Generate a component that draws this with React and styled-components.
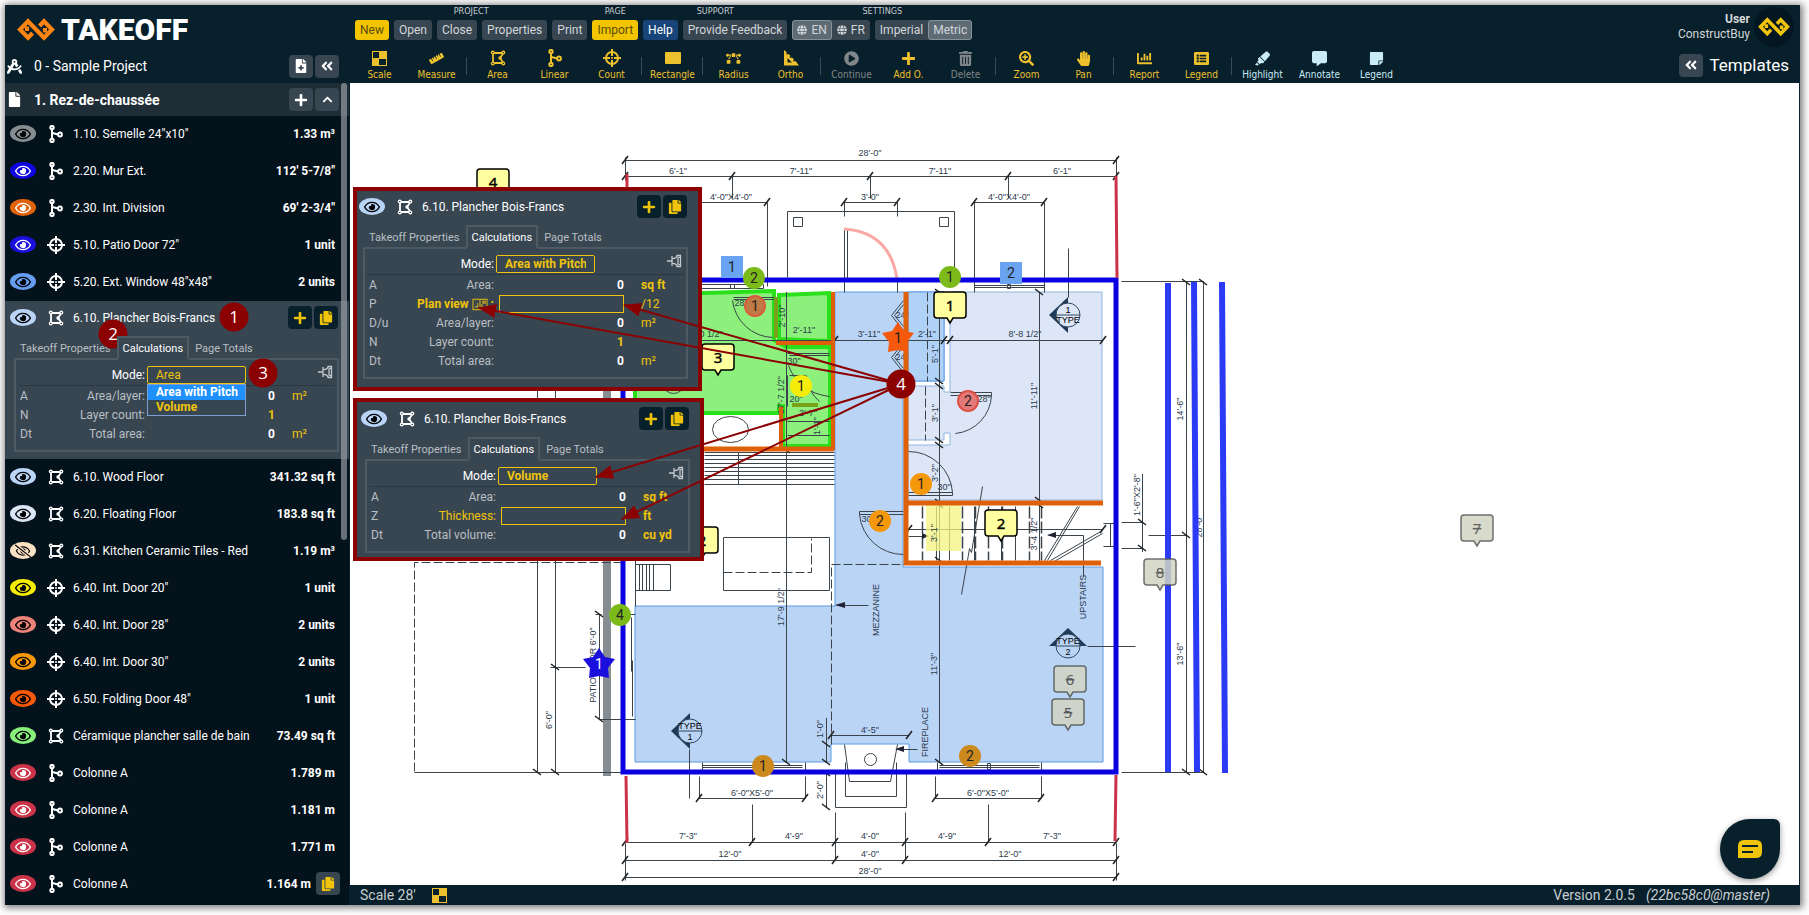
import React from "react";
import styled, { createGlobalStyle } from "styled-components";
import {
  FaRegEye, FaRegEyeSlash, FaDraftingCompass, FaFileMedical, FaAngleDoubleLeft, FaFile, FaPlus,
  FaChevronUp, FaCopy, FaGlobe, FaRuler, FaBezierCurve, FaPlayCircle, FaTrashAlt, FaSearchPlus,
  FaHandPaper, FaChartBar, FaListAlt, FaHighlighter, FaCommentAlt, FaStickyNote,
} from "react-icons/fa";

const navy = "#08202b"
const slate = "#384652"
const gold = "#f0c40a"
const crimson = "#8b0000"

/* ---------- icons ---------- */

const AreaIcon = () => (
  <svg width="16" height="16" viewBox="0 0 16 16" fill="none" stroke="currentColor" strokeWidth="1.800">
    <path d="M3 3H13.500L10 8L13.500 13H3Z" />
    <g fill="currentColor" stroke="none">
      <circle cx="2.800" cy="2.600" r="2" /><circle cx="13.300" cy="2.600" r="2" />
      <circle cx="2.800" cy="13.400" r="2" /><circle cx="13.300" cy="13.400" r="2" /><circle cx="10" cy="8" r="1.700" />
    </g>
    <g fill={navy} stroke="none">
      <circle cx="2.800" cy="2.600" r="0.700" /><circle cx="13.300" cy="2.600" r="0.700" />
      <circle cx="2.800" cy="13.400" r="0.700" /><circle cx="13.300" cy="13.400" r="0.700" />
    </g>
  </svg>
)

const LinearIcon = () => (
  <svg width="16" height="18" viewBox="0 0 16 18" fill="none" stroke="currentColor" strokeWidth="2">
    <path d="M4 4.500V13.500M4.500 8L10 9.500" />
    <circle cx="4" cy="2.600" r="1.700" /><circle cx="4" cy="15.400" r="1.700" /><circle cx="12" cy="9.500" r="1.900" />
  </svg>
)

const CountIcon = () => (
  <svg width="18" height="18" viewBox="0 0 18 18" fill="none" stroke="currentColor" strokeWidth="2">
    <circle cx="9" cy="9" r="6" />
    <path d="M9 0V7M9 11V18M0 9H7M11 9H18" />
    <circle cx="9" cy="9" r="1" fill="currentColor" stroke="none" />
  </svg>
)

const CheckerIcon = () => (
  <svg width="15" height="15" viewBox="0 0 15 15">
    <rect x="0.500" y="0.500" width="14" height="14" fill={navy} stroke="currentColor" />
    <path d="M7 0H15V8H7ZM0 7H7V15H0Z" fill="currentColor" />
  </svg>
)

const RectIcon = () => (
  <svg width="16" height="14" viewBox="0 0 16 14"><rect y="1" width="16" height="12" rx="1" fill="currentColor" /></svg>
)

const OrthoIcon = () => (
  <svg width="16" height="16" viewBox="0 0 16 16">
    <path fillRule="evenodd" fill="currentColor" d="M1 0L4 2.500L3 3.500L4 4.500L5.500 4L7.500 6L6.500 7L7.500 8L9 7.500L11 9.500L10 10.500L11 11.500L12.500 11L16 15.500H1ZM4.500 8V12.500H9Z" />
  </svg>
)

const PinIcon = () => (
  <svg width="15" height="14" viewBox="0 0 15 14" fill="none" stroke="#c4c9cd" strokeWidth="1.300">
    <path d="M0 7H5M5 2V12M5 4.500Q8 5 10 2.500V1.500H13.500V12.500H10V11.500Q8 9 5 9.500M13.500 3L11 4V10L13.500 11" />
  </svg>
)

const PlanIcon = () => (
  <svg width="16" height="13" viewBox="0 0 17 13" fill="none" stroke="#c9a616" strokeWidth="1.200">
    <path d="M1 1H16V12H1ZM8.500 1V12M3 9H6V5M10.500 6V9.500H14M11.500 3H14V5H11.500Z" />
  </svg>
)

const BrandMark = ({ color, width }) => (
  <svg width={width} viewBox="0 0 38 23" fill="none" stroke={color} strokeWidth="4.200">
    <path d="M15.500 15L11 19.800L3 11.500L11 3.200L27 19.800L35 11.500L27 3.200L22.500 8M10 8.500V13M28 10V14.500" />
  </svg>
)

const kindIcons = { area: AreaIcon, linear: LinearIcon, count: CountIcon }

/* ---------- data ---------- */

const itemsBefore = [
  { name: '1.10. Semelle 24"x10"', value: "1.33 m³", kind: "linear", color: "#868d92", eye: "#000" },
  { name: "2.20. Mur Ext.", value: "112' 5-7/8\"", kind: "linear", color: "#0f05e0", eye: "#fff" },
  { name: "2.30. Int. Division", value: "69' 2-3/4\"", kind: "linear", color: "#e06209", eye: "#fff" },
  { name: '5.10. Patio Door 72"', value: "1 unit", kind: "count", color: "#1b0fdd", eye: "#fff" },
  { name: '5.20. Ext. Window 48"x48"', value: "2 units", kind: "count", color: "#659df0", eye: "#000" },
]

const itemsAfter = [
  { name: "6.10. Wood Floor", value: "341.32 sq ft", kind: "area", color: "#bad4f7", eye: "#000" },
  { name: "6.20. Floating Floor", value: "183.8 sq ft", kind: "area", color: "#dce5f6", eye: "#000" },
  { name: "6.31. Kitchen Ceramic Tiles - Red", value: "1.19 m³", kind: "area", color: "#fbe2c4", eye: "#000", hidden: true },
  { name: '6.40. Int. Door 20"', value: "1 unit", kind: "count", color: "#f5ec05", eye: "#000" },
  { name: '6.40. Int. Door 28"', value: "2 units", kind: "count", color: "#ec8278", eye: "#000" },
  { name: '6.40. Int. Door 30"', value: "2 units", kind: "count", color: "#f69708", eye: "#000" },
  { name: '6.50. Folding Door 48"', value: "1 unit", kind: "count", color: "#f7590a", eye: "#000" },
  { name: "Céramique plancher salle de bain", value: "73.49 sq ft", kind: "area", color: "#88ef7b", eye: "#000" },
  { name: "Colonne A", value: "1.789 m", kind: "linear", color: "#cb3348", eye: "#fff" },
  { name: "Colonne A", value: "1.181 m", kind: "linear", color: "#cb3348", eye: "#fff" },
  { name: "Colonne A", value: "1.771 m", kind: "linear", color: "#cb3348", eye: "#fff" },
  { name: "Colonne A", value: "1.164 m", kind: "linear", color: "#cb3348", eye: "#fff", copy: true },
]

const tools = [
  [["Scale", CheckerIcon], ["Measure", FaRuler]],
  [["Area", AreaIcon], ["Linear", LinearIcon], ["Count", CountIcon]],
  [["Rectangle", RectIcon]],
  [["Radius", FaBezierCurve], ["Ortho", OrthoIcon]],
  [["Continue", FaPlayCircle, "#80868a"], ["Add O.", FaPlus], ["Delete", FaTrashAlt, "#80868a"]],
  [["Zoom", FaSearchPlus], ["Pan", FaHandPaper]],
  [["Report", FaChartBar], ["Legend", FaListAlt]],
  [["Highlight", FaHighlighter, "#c9ebf7"], ["Annotate", FaCommentAlt, "#c9ebf7"], ["Legend", FaStickyNote, "#c9ebf7"]],
]

const rowsLayer = [
  ["A", "Area/layer:", "0", "m²"],
  ["N", "Layer count:", "1", "", true],
  ["Dt", "Total area:", "0", "m²"],
]

const rowsPitch = [
  ["A", "Area:", "0", "sq ft"],
  ["P", "Plan view", null, "/12"],
  ["D/u", "Area/layer:", "0", "m²"],
  ["N", "Layer count:", "1", "", true],
  ["Dt", "Total area:", "0", "m²"],
]

const rowsVolume = [
  ["A", "Area:", "0", "sq ft"],
  ["Z", "Thickness:", null, "ft"],
  ["Dt", "Total volume:", "0", "cu yd"],
]

/* ---------- item panel ---------- */

const ItemPanel = ({ id, mode, rows, open }) => (
  <div>
    <PanelHead>
      <EyeButton $color="#bad4f7" $eye="#000" aria-label="Toggle visibility"><FaRegEye /></EyeButton>
      <KindBox><AreaIcon /></KindBox>
      <Name>6.10. Plancher Bois-Francs</Name>
      <IconButton $dark aria-label="Add"><FaPlus /></IconButton>
      <IconButton $dark aria-label="Copy"><FaCopy /></IconButton>
    </PanelHead>
    <Tabs role="tablist">
      <Tab role="tab">Takeoff Properties</Tab>
      <Tab role="tab" $active aria-selected="true">Calculations</Tab>
      <Tab role="tab">Page Totals</Tab>
    </Tabs>
    <Box>
      <ModeRow>
        <ModeLabel htmlFor={`${id}-mode`}>Mode:</ModeLabel>
        <SelectWrap>
          <Select id={`${id}-mode`} defaultValue={mode} $plain={open}>
            <option>Area</option>
            <option>Area with Pitch</option>
            <option>Volume</option>
          </Select>
          {open && (
            <Options role="listbox">
              <Option role="option" $selected>Area with Pitch</Option>
              <Option role="option">Volume</Option>
            </Options>
          )}
        </SelectWrap>
        <PinButton aria-label="Pin"><PinIcon /></PinButton>
      </ModeRow>
      <Calc>
        <tbody>
          {rows.map(([code, label, value, unit, accent]) => (
            <tr key={code}>
              <Code>{code}</Code>
              <Label $accent={value === null} $strong={label === "Plan view"}>
                {value === null ? (
                  <label htmlFor={`${id}-${code}`}>{label}{label === "Plan view" && <> <PlanIcon /> :</>}</label>
                ) : label}
              </Label>
              <Value $accent={accent}>
                {value === null ? <Field id={`${id}-${code}`} type="text" /> : value}
              </Value>
              <Unit $strong={/sq|ft|cu/.test(unit)}>{unit}</Unit>
            </tr>
          ))}
        </tbody>
      </Calc>
    </Box>
  </div>
)

const Item = ({ item }) => {
  const Kind = kindIcons[item.kind]
  return (
    <Row>
      <EyeButton $color={item.color} $eye={item.eye} aria-label="Toggle visibility">
        {item.hidden ? <FaRegEyeSlash /> : <FaRegEye />}
      </EyeButton>
      <KindBox><Kind /></KindBox>
      <Name>{item.name}</Name>
      <Amount>{item.value}</Amount>
      {item.copy && <IconButton $gold aria-label="Copy"><FaCopy /></IconButton>}
    </Row>
  )
}

/* ---------- floor plan ---------- */

// [x1, y1, x2, y2, tick positions along the line]
const dims = [
  [625, 160, 1116, 160, [625, 1116]],
  [625, 176, 1116, 176, [625, 732, 870, 1008, 1116]],
  [660, 202, 767, 202, [767]],
  [844, 202, 897, 202, [844, 897]],
  [974, 202, 1044, 202, [974, 1044]],
  [635, 340, 1103, 340, [835, 944, 950, 1103]],
  [908, 529, 1103, 529, [909, 1103]],
  [831, 735, 909, 735, [831, 909]],
  [699, 798, 805, 798, [699, 805]],
  [935, 798, 1041, 798, [935, 1041]],
  [625, 842, 1116, 842, [625, 752, 835, 905, 988, 1116]],
  [625, 860, 1116, 860, [625, 835, 905, 1116]],
  [625, 877, 1116, 877, [625, 1116]],
  [786, 292, 786, 762, [450, 762]],
  [939, 292, 939, 762, [292, 381, 386, 440, 445, 502, 505, 560, 762]],
  [1039, 292, 1039, 562, [292, 500, 505]],
  [826, 718, 826, 762, [744, 762]],
  [826, 772, 826, 808, [773, 807]],
  [1142, 474, 1142, 552, [522, 548]],
  [1186, 281, 1186, 772, [282, 535, 772]],
  [1203, 281, 1203, 772, [282, 772]],
  [537, 385, 537, 772, [772]],
  [555, 385, 555, 772, [667, 772]],
  [599, 614, 599, 719, [614, 719]],
]

const lines = [
  "M625 157V180M1116 157V180M625 843V880M1116 843V880",
  "M732 176V198M870 176V198M1008 176V198M767 202V286M844 202V216M897 202V216M974 202V292M1044 202V292",
  "M787 277V211H954V277M793 217H802V226H793ZM939 217H948V226H939Z",
  "M844 292V229H847V280M897 279V292",
  "M660 284H763V288H660M730 284H734V288H730ZM974 285H1044V287H974M1007 284H1010V288H1007Z",
  "M1068 248V297M689 749V798M1087 646H1135",
  "M1121 281H1203M1121 772H1203M1121 522H1142M1121 548H1142M1148 535H1186M1103 523H1116V546H1103M1110 523V546",
  "M550 667H585M599 719H635M595 614H601M630 614H635M630 719H635M631 617V671M632 660V716",
  "M635 555V606M635 564H670V590H635M639 564V590M642 564V590M646 564V590M649 564V590M653 564V590",
  "M723 537H829V590H723ZM704 452H834M704 455H834M704 459H834M704 463H834M704 467H834M704 471H834M704 475H834M704 479H834M704 484H834M738 452V484",
  "M702 762V770M805 762V770M702 765H802M702 767H802M937 762V770M1041 762V770M939 765H1039M939 767H1039M987 763H990V769H987Z",
  "M844 744L849 781H890L897 744M835 772V807H906V772M845 762V796H896V762",
  "M699 776V798M805 776V798M935 776V798M1041 776V798M752 804V842M835 812V860M905 812V860M988 804V842",
  "M950 392H991V395H950M991 395A40 40 0 0 1 955 433M908 492H952V495H908M908 451A44 44 0 0 1 952 492",
  "M903 511H859V514H903M859 514A44 44 0 0 0 903 554M733 297H776M733 299H776M732 300A42 42 0 0 0 772 337",
  "M787 353H829M789 355H829M787 375V406M789 375H805M806 375Q808 392 819 401M788 365Q798 392 829 396M787 421H829M787 435H829",
  "M903 300L891 315L903 330M903 304L894 315L903 326M903 342L891 357L903 372M903 346L894 357L903 368",
  "M982 486L971 552L969 548L967 560L961 594M1044 560L1077 506M1047 560L1079 506M1050 560L1102 530M1052 562L1102 533",
  "M908 536H928M1048 535H1083V576M868 605H836M917 749H897M414 772H622",
  "M949 506V560M1001 506V560M1015 506V560M974 506V560M936 506V560",
]

// text, x, y, rotated
const labels = [
  ["28'-0\"", 870, 156], ["6'-1\"", 678, 174], ["7'-11\"", 801, 174], ["7'-11\"", 940, 174], ["6'-1\"", 1062, 174],
  ["4'-0\"X4'-0\"", 731, 200], ["3'-0\"", 870, 200], ["4'-0\"X4'-0\"", 1009, 200],
  ["0 1/2\"", 711, 337], ["3'-11\"", 869, 337], ["2'-1\"", 927, 337], ["8'-8 1/2\"", 1025, 337],
  ["28\"", 741, 306], ["2'-11\"", 804, 333], ["30\"", 794, 364], ["20\"", 796, 402], ["2'-7\"", 808, 416],
  ["24\"", 902, 318], ["24\"", 902, 360], ["28\"", 984, 402], ["30\"", 944, 490], ["30\"", 868, 522],
  ["4'-5\"", 870, 733], ["6'-0\"X5'-0\"", 752, 796], ["6'-0\"X5'-0\"", 988, 796],
  ["7'-3\"", 688, 839], ["4'-9\"", 794, 839], ["4'-0\"", 870, 839], ["4'-9\"", 947, 839], ["7'-3\"", 1052, 839],
  ["12'-0\"", 730, 857], ["4'-0\"", 870, 857], ["12'-0\"", 1010, 857], ["28'-0\"", 870, 874],
  ["2'-10\"", 785, 316, true], ["17'-7 1/2\"", 784, 395, true], ["1'-1\"", 820, 426, true], ["5'-1\"", 938, 354, true], ["3'-1\"", 938, 413, true],
  ["3'-2\"", 938, 473, true], ["11'-11\"", 1037, 396, true], ["3'-1\"", 937, 533, true], ["3'-4 1/2\"", 1037, 534, true],
  ["17'-9 1/2\"", 784, 607, true], ["11'-3\"", 937, 664, true], ["1'-0\"", 823, 729, true], ["2'-0\"", 823, 790, true],
  ["1'-6\"X2'-8\"", 1140, 495, true], ["14'-6\"", 1183, 409, true], ["13'-6\"", 1183, 654, true], ["28'-0\"", 1202, 526, true],
  ["6'-0\"", 552, 720, true], ["PATIO DOOR 6'-0\"", 596, 665, true],
]

const notes = [["MEZZANINE", 879, 610], ["UPSTAIRS", 1086, 597], ["FIREPLACE", 928, 732]]

// shape, text, x, y, fill, ring
const markers = [
  ["square", "1", 732, 267, "#6ba3f3"], ["square", "2", 1011, 273, "#6ba3f3"],
  ["circle", "2", 754, 278, "#7cba1a"], ["circle", "1", 950, 277, "#7cba1a"], ["circle", "4", 620, 615, "#7cba1a"],
  ["circle", "1", 755, 306, "#c07a45", "#d95b3a"], ["circle", "2", 968, 401, "#e47a78", "#dd5045"],
  ["circle", "1", 801, 386, "#f5ec0a"], ["circle", "1", 921, 484, "#f5970a"], ["circle", "2", 880, 521, "#f5970a"],
  ["circle", "1", 763, 766, "#cc8a1e"], ["circle", "2", 970, 756, "#cc8a1e"],
  ["star", "1", 898, 338, "#f6590c"], ["star", "1", 599, 664, "#1b0fdd"],
]

const tags = [
  ["4", 493, 182], ["1", 950, 305], ["3", 718, 357], ["2", 1001, 523], ["2", 702, 540],
  ["8", 1160, 572, true], ["6", 1070, 679, true], ["5", 1068, 712, true], ["7", 1477, 528, true],
]

const starPath = "M0 -16L6 -7L16 -5L9 4L10 14L0 12L-10 14L-9 4L-16 -5L-6 -7Z"

const Marker = ({ data: [shape, text, x, y, fill, ring] }) => (
  <g transform={`translate(${x} ${y})`}>
    {shape === "square" && <rect x="-11" y="-11" width="22" height="22" fill={fill} />}
    {shape === "circle" && <circle r={ring ? 10 : 11} fill={fill} stroke={ring} strokeWidth={ring ? 2 : 0} />}
    {shape === "star" && <path d={starPath} fill={fill} />}
    <MarkText y="5" fill={fill === "#1b0fdd" ? "#fff" : "#222"}>{text}</MarkText>
  </g>
)

const Tag = ({ data: [text, x, y, done] }) => (
  <g transform={`translate(${x} ${y})`} opacity={done ? 0.85 : 1}>
    <path
      d="M-13 -13H13Q16 -13 16 -10V10Q16 13 13 13H3L0 18L-3 13H-13Q-16 13 -16 10V-10Q-16 -13 -13 -13Z"
      fill={done ? "#d2d4c2" : "#ffffa0"} stroke={done ? "#555" : "#000"} strokeWidth="1.500"
    />
    <TagText y="6" $done={done}>{text}</TagText>
  </g>
)

const TypeMark = ({ x, y, up, n, below }) => (
  <g transform={`translate(${x} ${y})`}>
    <path d={up ? "M0 -18L19 0H-19Z" : "M-19 0L0 -18V18Z"} fill="#203a58" />
    <circle r="12" fill={n === "1" && !below ? "#dce6f6" : "#bad4f6"} stroke="#33475e" />
    <path d="M-12 0H12" stroke="#33475e" />
    <DimText y={below ? -2 : 8}>TYPE</DimText>
    <DimText y={below ? 9 : -2}>{n}</DimText>
  </g>
)

const FloorPlan = () => (
  <PlanSvg viewBox="350 83 1449 802" preserveAspectRatio="xMinYMin meet" aria-label="Floor plan">
    <g stroke="#5b9be6">
      <path fill="#bad4f6" d="M835 292H944V381H903V567H1103V762H909V744H831V762H635V606H835Z" />
      <path fill="#fff" stroke="none" d="M908 382H949V446H908Z" />
      <path fill="#b0d2f7" d="M908 292H944V381H908Z" />
      <path fill="#dce6f6" stroke="#8fb4de" d="M950 292H1102V500H908V445H950V433H944V440H908V386H944V392H950Z" />
      <path fill="#fff" stroke="none" d="M908 505H1102V561H908Z" />
    </g>
    <path d="M607 385V776" stroke="#858d92" strokeWidth="8" />
    <g fill="#8df07c" stroke="#2ae01a" strokeWidth="4">
      <path d="M635 295L774 291V340L786 347H830V446H783V406H779V413H635Z" />
      <path d="M779 295L829 293V341L779 339Z" />
    </g>
    <g stroke="#3c444b" strokeWidth="1" fill="none" shapeRendering="crispEdges">
      {dims.map(([x1, y1, x2, y2]) => <line key={`${x1}-${y1}-${x2}`} x1={x1} y1={y1} x2={x2} y2={y2} />)}
    </g>
    <g stroke="#3c444b" strokeWidth="1" fill="none" transform="translate(0.5 0.5)">
      {lines.map((d) => <path key={d} d={d} />)}
      <ellipse cx="730" cy="429" rx="18" ry="13" />
      <circle cx="870" cy="759" r="6" />
      <circle cx="673" cy="382" r="11" />
      <path strokeDasharray="9 3" d="M622 562H414V772M723 572H811V538M831 744V564H904M927 292V381M925 386V440" />
      <path strokeDasharray="12 3" strokeWidth="1.500" d="M922 506V560M962 506V560M975 506V560M988 506V560M1002 506V560M1029 506V560M1041 506V560" />
    </g>
    <g stroke="#222" strokeWidth="1.500">
      {dims.map(([x1, y1, x2, y2, at]) => at.map((p) => {
        const x = x1 === x2 ? x1 : p
        const y = x1 === x2 ? p : y1
        return x1 === x2
          ? <line key={`${x}-${y}`} x1={x - 4} y1={y - 3} x2={x + 4} y2={y + 3} />
          : <line key={`${x}-${y}`} x1={x - 3} y1={y + 4} x2={x + 3} y2={y - 4} />
      }))}
    </g>
    <path fill="#223" d="M835 605L845 602V608ZM895 749L904 746V752ZM1047 535L1056 532V538ZM929 536L922 533V539Z" />
    <rect x="926" y="505" width="35" height="46" fill="#f4f480" opacity="0.75" />
    <g fill="#2c3a4c">
      {labels.map(([text, x, y, turned]) => (
        <DimText key={`${text}${x}${y}`} x={x} y={y} transform={turned ? `rotate(-90 ${x} ${y})` : undefined}>{text}</DimText>
      ))}
      {notes.map(([text, x, y]) => (
        <DimText key={text} x={x} y={y} transform={`rotate(-90 ${x} ${y})`}>{text}</DimText>
      ))}
    </g>
    <TypeMark x={1068} y={315} n="1" />
    <TypeMark x={690} y={731} n="1" below />
    <TypeMark x={1068} y={646} n="2" up below />
    <g fill="none" stroke="#de6009" strokeWidth="5">
      <path d="M906 292V563H1101M906 503H1103M635 449H834" />
      <path strokeWidth="4" d="M833 292V450M776 343H832M781 407V447" />
    </g>
    <path d="M776 297V338M792 405H818" stroke="#7ba01a" strokeWidth="4" />
    <path d="M844 229Q890 232 897 279" fill="none" stroke="#f9aaa4" strokeWidth="3" />
    <rect x="623" y="280" width="493" height="492" fill="none" stroke="#0b00e0" strokeWidth="5" />
    <path d="M627 174V278M1116 176L1117 278M626 776L627 843M1116 775L1115 841" stroke="#cb3348" strokeWidth="3" />
    <path d="M1168 283V772M1194 282L1197 772M1222 282L1225 773" stroke="#2b3bf5" strokeWidth="6" />
    {markers.map((m) => <Marker key={`${m[2]}-${m[3]}`} data={m} />)}
    {tags.map((t) => <Tag key={`${t[1]}-${t[2]}`} data={t} />)}
  </PlanSvg>
)

// callout steps and the arrows that leave step 4
const steps = [["1", 234, 317], ["2", 113, 334], ["3", 263, 373], ["4", 901, 384]]
const arrows = [[624, 305], [479, 308], [596, 477], [622, 519]]

const Guide = () => (
  <GuideSvg viewBox="5 5 1795 900" preserveAspectRatio="xMinYMin meet">
    <defs>
      <marker id="head" markerUnits="userSpaceOnUse" markerWidth="18" markerHeight="14" refX="17" refY="7" orient="auto">
        <path d="M0 0L18 7L0 14Z" fill={crimson} />
      </marker>
    </defs>
    {arrows.map(([x, y]) => (
      <line key={y} x1="901" y1="384" x2={x} y2={y} stroke={crimson} strokeWidth="2" markerEnd="url(#head)" />
    ))}
    {steps.map(([n, x, y]) => (
      <g key={n}>
        <circle cx={x} cy={y} r="14.500" fill={crimson} />
        <StepText x={x} y={y + 6}>{n}</StepText>
      </g>
    ))}
  </GuideSvg>
)

const App = () => (
  <>
    <GlobalStyle />
    <Window>
      <Header>
        <Brand>
          <Logo><BrandMark color="#ff8412" width="38" />TAKEOFF</Logo>
          <ProjectRow>
            <LeadIcon><FaDraftingCompass /></LeadIcon>
            <Project>0 - Sample Project</Project>
            <IconButton aria-label="New page"><FaFileMedical /></IconButton>
            <IconButton aria-label="Collapse"><FaAngleDoubleLeft /></IconButton>
          </ProjectRow>
        </Brand>
        <Center>
          <Menu>
            <Group>
              <Caption>PROJECT</Caption>
              <Buttons>
                <Button $tone="gold">New</Button>
                <Button>Open</Button>
                <Button>Close</Button>
                <Button>Properties</Button>
                <Button>Print</Button>
              </Buttons>
            </Group>
            <Group>
              <Caption>PAGE</Caption>
              <Buttons><Button $tone="gold">Import</Button></Buttons>
            </Group>
            <Group>
              <Caption>SUPPORT</Caption>
              <Buttons>
                <Button $tone="blue">Help</Button>
                <Button>Provide Feedback</Button>
              </Buttons>
            </Group>
            <Group>
              <Caption>SETTINGS</Caption>
              <Buttons>
                <Toggle>
                  <ToggleButton $on><FaGlobe size={10} />EN</ToggleButton>
                  <ToggleButton><FaGlobe size={10} />FR</ToggleButton>
                </Toggle>
                <Toggle>
                  <ToggleButton>Imperial</ToggleButton>
                  <ToggleButton $on>Metric</ToggleButton>
                </Toggle>
              </Buttons>
            </Group>
          </Menu>
          <Tools>
            {tools.map((group, i) => (
              <ToolGroup key={i}>
                {group.map(([label, Icon, color]) => (
                  <Tool key={label} $color={color}>
                    <ToolIcon><Icon /></ToolIcon>
                    {label}
                  </Tool>
                ))}
              </ToolGroup>
            ))}
          </Tools>
        </Center>
        <Account>
          <User>
            <div><b>User</b><br />ConstructBuy</div>
            <Avatar><BrandMark color={gold} width="32" /></Avatar>
          </User>
          <Templates>
            <IconButton aria-label="Expand templates"><FaAngleDoubleLeft /></IconButton>
            Templates
          </Templates>
        </Account>
      </Header>

      <Sidebar>
        <PageRow>
          <LeadIcon><FaFile /></LeadIcon>
          <Project as="h2" $bold>1. Rez-de-chaussée</Project>
          <IconButton aria-label="Add item"><FaPlus /></IconButton>
          <IconButton aria-label="Collapse page"><FaChevronUp size={11} /></IconButton>
        </PageRow>
        <List>
          {itemsBefore.map((item) => <Item key={item.name} item={item} />)}
          <OpenItem><ItemPanel id="side" mode="Area" rows={rowsLayer} open /></OpenItem>
          {itemsAfter.map((item) => <Item key={item.name + item.value} item={item} />)}
        </List>
        <Thumb />
      </Sidebar>

      <Canvas>
        <FloorPlan />
        <Callout $top={104} $width={349} $pad="4px 10px 8px 2px">
          <ItemPanel id="pitch" mode="Area with Pitch" rows={rowsPitch} />
        </Callout>
        <Callout $top={315} $width={351} $pad="5px 10px 4px 4px">
          <ItemPanel id="volume" mode="Volume" rows={rowsVolume} />
        </Callout>
        <Chat aria-label="Chat">
          <svg width="24" height="18" viewBox="0 0 24 18">
            <path fill={gold} d="M6 0H18Q24 0 24 6V12Q24 18 18 18H0V6Q0 0 6 0Z" />
            <path d="M4 6H20M4 12H15" stroke={navy} strokeWidth="2" />
          </svg>
        </Chat>
      </Canvas>

      <Footer>
        <span>Scale 28'</span>
        <FootIcon><CheckerIcon /></FootIcon>
        <Version>Version 2.0.5</Version>
        <em>(22bc58c0@master)</em>
      </Footer>
      <Guide />
    </Window>
  </>
)

const GlobalStyle = createGlobalStyle`
  * { box-sizing: border-box; }
  body {
    margin: 0;
    background: #fff;
    font-family: Roboto, sans-serif;
    font-size: 12px;
    color: #fff;
    overflow: hidden;
  }
  button, input, select { font: inherit; color: inherit; margin: 0; }
  button { border: 0; padding: 0; background: none; cursor: pointer; }
`

const Window = styled.div`
  position: relative;
  display: grid;
  grid-template: 78px minmax(0, 1fr) 20px / 345px minmax(0, 1fr);
  height: calc(100vh - 15px);
  margin: 5px 9px 10px 5px;
  background: ${navy};
  box-shadow: 1px 1px 7px 2px rgba(0, 0, 0, 0.5);
`

const Header = styled.header`
  grid-column: 1 / 3;
  display: flex;
`

const Brand = styled.div`
  width: 345px;
`

const Logo = styled.div`
  display: flex;
  align-items: center;
  gap: 6px;
  height: 46px;
  padding: 2px 0 0 12px;
  font-size: 30px;
  font-weight: 900;
`

const ProjectRow = styled.div`
  display: flex;
  align-items: center;
  gap: 2px;
  height: 30px;
  padding: 0 11px 0 2px;
`

const PageRow = styled.div`
  display: flex;
  align-items: center;
  gap: 2px;
  height: 33px;
  padding: 0 10px 0 2px;
  background: #1f2e36;
`

const LeadIcon = styled.span`
  display: flex;
  width: 25px;
  font-size: 15px;
`

const Project = styled.h1`
  flex: 1;
  margin: 0;
  font-size: 14px;
  font-weight: ${(props) => props.$bold ? 700 : 400};
`

const IconButton = styled.button`
  display: flex;
  align-items: center;
  justify-content: center;
  flex: none;
  width: 24px;
  height: 23px;
  border-radius: 4px;
  font-size: 14px;
  background: ${(props) => props.$dark ? navy : slate};
  color: ${(props) => props.$dark || props.$gold ? gold : "#fff"};
`

const Center = styled.div`
  flex: 1;
`

const Menu = styled.nav`
  display: flex;
  gap: 5px;
  padding-left: 5px;
`

const Group = styled.div`
  text-align: center;
`

const Caption = styled.div`
  height: 15px;
  font: 9px/13px "DejaVu Sans Condensed", "DejaVu Sans", sans-serif;
  color: #c9ced1;
`

const Buttons = styled.div`
  display: flex;
  gap: 5px;
`

const tones = {
  gold: "background: #f2c500; color: #5b4c08;",
  blue: "background: #17457a; color: #fff;",
}

const Button = styled.button`
  height: 20px;
  padding: 0 5px;
  border-radius: 3px;
  font-size: 12px;
  background: ${slate};
  color: #d3d6d9;
  ${(props) => tones[props.$tone]}
`

const Toggle = styled.div`
  display: flex;
  height: 20px;
  border-radius: 3px;
  background: ${slate};
`

const ToggleButton = styled.button`
  display: flex;
  align-items: center;
  gap: 4px;
  padding: 0 4px;
  border: 1px solid ${(props) => props.$on ? "#87919a" : "transparent"};
  border-radius: 3px;
  font-size: 12px;
  color: #d3d6d9;
  background: ${(props) => props.$on ? "#5e6b75" : "none"};
`

const Tools = styled.div`
  display: flex;
  padding: 8px 0 0 1px;
`

const ToolGroup = styled.div`
  display: flex;
  & + &::before {
    content: "";
    width: 1px;
    height: 18px;
    margin: 9px 2px 0 1px;
    background: #3c4a54;
  }
`

const Tool = styled.button`
  width: 57px;
  text-align: center;
  font: 10px/14px "DejaVu Sans Condensed", "DejaVu Sans", sans-serif;
  color: ${(props) => props.$color || "#edc02d"};
`

const ToolIcon = styled.span`
  display: flex;
  align-items: center;
  justify-content: center;
  height: 20px;
  font-size: 15px;
`

const Account = styled.div`
  display: flex;
  flex-direction: column;
  align-items: flex-end;
  padding: 2px 6px 0 0;
`

const User = styled.div`
  display: flex;
  align-items: center;
  gap: 4px;
  height: 40px;
  text-align: right;
  line-height: 15px;
  color: #d3d6d9;
`

const Avatar = styled.span`
  display: flex;
  align-items: center;
  justify-content: center;
  width: 40px;
  height: 40px;
  border-radius: 50%;
  background: #031622;
`

const Templates = styled.div`
  display: flex;
  align-items: center;
  gap: 6px;
  height: 38px;
  padding: 0 5px 0 0;
  font-size: 17px;
`

const Sidebar = styled.aside`
  position: relative;
  grid-row: 2 / 4;
  overflow: hidden;
  background: #04121b;
  border-right: 1px solid ${navy};
`

const List = styled.ul`
  margin: 0;
  padding: 0;
  list-style: none;
`

const Row = styled.li`
  display: flex;
  align-items: center;
  height: 37px;
  padding: 0 14px 2px 5px;
  &:last-child { padding-right: 9px; }
`

const OpenItem = styled.li`
  padding: 5px 10px 7px 5px;
  background: ${slate};
`

const EyeButton = styled.button`
  display: flex;
  align-items: center;
  justify-content: center;
  flex: none;
  width: 26px;
  height: 17px;
  border-radius: 50%;
  font-size: 16px;
  color: ${(props) => props.$eye};
  background: ${(props) => props.$color};
`

const KindBox = styled.span`
  display: flex;
  justify-content: center;
  width: 20px;
  margin: 0 7px 0 10px;
`

const Name = styled.span`
  flex: 1;
  white-space: nowrap;
`

const Amount = styled.span`
  margin-right: 5px;
  font-weight: 700;
  ${Row}:not(:last-child) & { margin-right: 0; }
`

const Thumb = styled.div`
  position: absolute;
  top: 0;
  right: 2px;
  width: 6px;
  height: 457px;
  border-radius: 3px;
  background: rgba(160, 165, 170, 0.65);
`

const PanelHead = styled.div`
  display: flex;
  align-items: center;
  height: 23px;
  ${IconButton} + ${IconButton} { margin: 0 1px 0 2px; }
`

const Tabs = styled.div`
  display: flex;
  height: 24px;
  margin: 7px 0 -2px 4px;
`

const Tab = styled.button`
  position: relative;
  height: 24px;
  padding: 0 4px;
  border: 2px solid ${(props) => props.$active ? "#4d5a63" : "transparent"};
  border-bottom-color: ${(props) => props.$active ? slate : "transparent"};
  font-size: 11px;
  background: ${(props) => props.$active ? slate : "none"};
  color: ${(props) => props.$active ? "#fff" : "#b9bfc3"};
  z-index: ${(props) => props.$active ? 1 : 0};
`

const Box = styled.div`
  margin-left: 4px;
  padding: 0 2px 7px;
  border: 2px solid #4d5a63;
`

const ModeRow = styled.div`
  display: flex;
  align-items: center;
  gap: 2px;
  height: 26px;
  padding: 4px 2px 0 2px;
  border-bottom: 1px solid #2b3843;
`

const ModeLabel = styled.label`
  width: 125px;
  text-align: right;
`

const SelectWrap = styled.div`
  position: relative;
  flex: none;
  width: 99px;
  height: 18px;
`

const Select = styled.select`
  display: block;
  width: 99px;
  height: 18px;
  padding: 0 8px;
  appearance: none;
  border: 1px solid ${gold};
  border-radius: 2px;
  background: ${slate};
  color: ${gold};
  font-weight: ${(props) => props.$plain ? 400 : 700};
`

const Options = styled.ul`
  position: absolute;
  z-index: 2;
  top: 18px;
  left: 0;
  right: 0;
  margin: 0;
  padding: 0;
  list-style: none;
  border: 1px solid #7e9fd6;
  background: ${slate};
`

const Option = styled.li`
  height: 15px;
  padding-left: 8px;
  line-height: 15px;
  font-weight: 700;
  white-space: nowrap;
  color: ${(props) => props.$selected ? "#fff" : gold};
  background: ${(props) => props.$selected ? "#1e90ff" : "none"};
`

const PinButton = styled.button`
  display: flex;
  margin-left: auto;
  padding-bottom: 6px;
`

const Calc = styled.table`
  width: 100%;
  border-collapse: collapse;
  table-layout: fixed;
  td { height: 19px; padding: 0; line-height: 18px; }
`

const Code = styled.td`
  width: 28px;
  text-indent: 2px;
  color: #b9bfc3;
`

const Label = styled.td`
  width: 99px;
  text-align: right;
  white-space: nowrap;
  color: ${(props) => props.$accent ? gold : "#b9bfc3"};
  font-weight: ${(props) => props.$strong ? 700 : 400};
  svg { vertical-align: middle; }
`

const Value = styled.td`
  width: 130px;
  text-align: right;
  font-weight: 700;
  color: ${(props) => props.$accent ? gold : "#fff"};
`

const Unit = styled.td`
  text-indent: 17px;
  white-space: nowrap;
  color: ${gold};
  font-weight: ${(props) => props.$strong ? 700 : 400};
`

const Field = styled.input`
  display: block;
  width: 125px;
  height: 18px;
  margin-left: auto;
  border: 1px solid ${gold};
  background: none;
`

const Canvas = styled.main`
  position: relative;
  overflow: hidden;
  margin-right: 1px;
  background: #fff;
`

const PlanSvg = styled.svg`
  display: block;
  width: 100%;
  height: 100%;
`

const DimText = styled.text`
  font: 9px "Liberation Sans", sans-serif;
  text-anchor: middle;
`

const MarkText = styled.text`
  font: 14px Roboto, sans-serif;
  text-anchor: middle;
`

const TagText = styled.text`
  font: 15px "Noto Sans", sans-serif;
  text-anchor: middle;
  fill: ${(props) => props.$done ? "#444" : "#000"};
  stroke: ${(props) => props.$done ? "none" : "#000"};
  stroke-width: 0.4;
  text-decoration: ${(props) => props.$done ? "line-through" : "none"};
`

const StepText = styled.text`
  font: 17px "Open Sans", sans-serif;
  text-anchor: middle;
  fill: #fff;
`

const Callout = styled.section`
  position: absolute;
  left: 3px;
  top: ${(props) => props.$top}px;
  width: ${(props) => props.$width}px;
  padding: ${(props) => props.$pad};
  border: 4px solid ${crimson};
  background: ${slate};
`

const Chat = styled.button`
  position: absolute;
  right: 19px;
  bottom: 6px;
  display: flex;
  align-items: center;
  justify-content: center;
  width: 60px;
  height: 60px;
  border-radius: 50% 6px 50% 50%;
  background: ${navy};
  box-shadow: 0 2px 6px rgba(0, 0, 0, 0.4);
`

const GuideSvg = styled.svg`
  position: absolute;
  inset: 0;
  width: 100%;
  height: 100%;
  pointer-events: none;
`

const Footer = styled.footer`
  display: flex;
  align-items: center;
  padding: 0 30px 0 10px;
  font-size: 14px;
  color: #c9ced1;
`

const FootIcon = styled.span`
  display: flex;
  margin-left: 16px;
  color: #edc02d;
`

const Version = styled.span`
  margin: 0 11px 0 auto;
`

export default App
